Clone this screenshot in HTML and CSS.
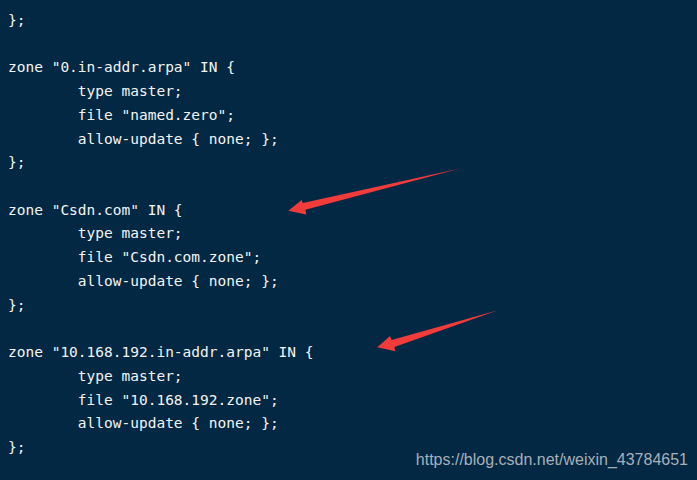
FILE: index.html
```html
<!DOCTYPE html>
<html>
<head>
<meta charset="utf-8">
<link rel="stylesheet" href="styles.css">
</head>
<body>
<pre class="code">};

zone "0.in-addr.arpa" IN {
        type master;
        file "named.zero";
        allow-update { none; };
};

zone "Csdn.com" IN {
        type master;
        file "Csdn.com.zone";
        allow-update { none; };
};

zone "10.168.192.in-addr.arpa" IN {
        type master;
        file "10.168.192.zone";
        allow-update { none; };
};</pre>
<svg class="arrows" width="697" height="480" viewBox="0 0 697 480">
  <polygon fill="#f23b3b" points="460,168.6 305.4,209.8 306.3,214.5 288.3,210.7 301.7,200 302.8,203"/>
  <polygon fill="#f23b3b" points="498,310.3 394.4,347 395.3,351.3 377.3,347.3 390,336 391.6,340"/>
</svg>
<div class="watermark">https://blog.csdn.net/weixin_43784651</div>
</body>
</html>
```
FILE: styles.css
```css
html, body {
  margin: 0;
  padding: 0;
}
body {
  width: 697px;
  height: 480px;
  background: #022843;
  position: relative;
  overflow: hidden;
}
.code {
  margin: 0;
  padding: 9px 8px 0 8px;
  font-family: "DejaVu Sans Mono", "Liberation Mono", monospace;
  font-size: 14.5px;
  line-height: 23.72px;
  color: #f4f4f4;
}
.arrows {
  position: absolute;
  left: 0;
  top: 0;
}
.watermark {
  position: absolute;
  right: 9px;
  top: 451px;
  font-family: "Liberation Sans", Arial, sans-serif;
  font-size: 16px;
  color: #a7b0ba;
}
```
